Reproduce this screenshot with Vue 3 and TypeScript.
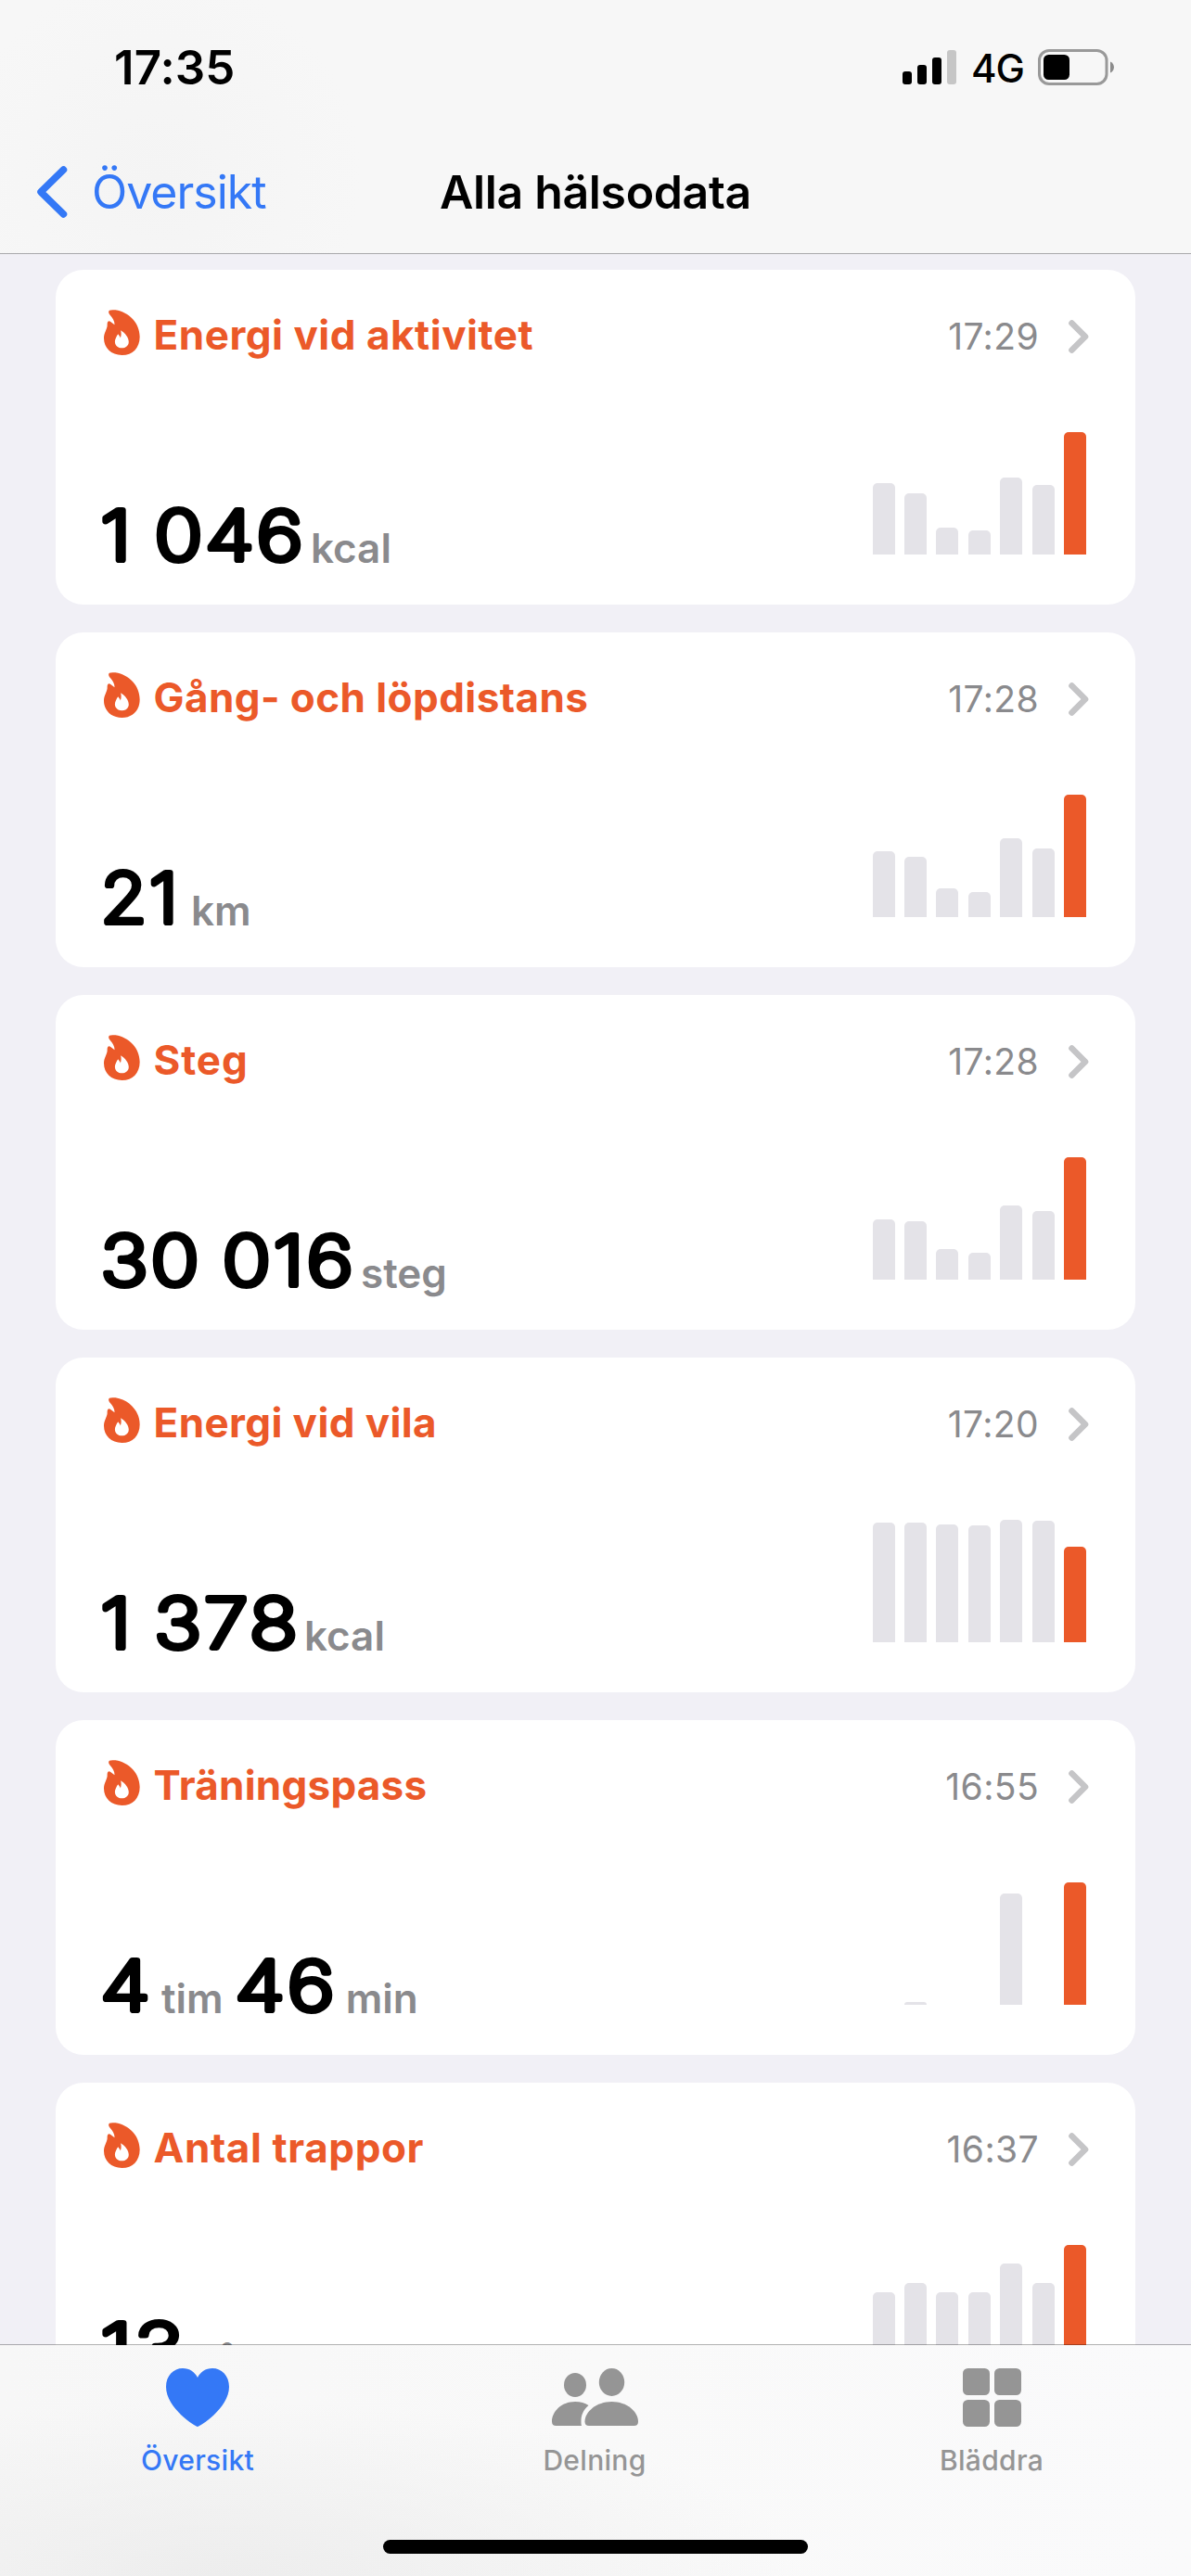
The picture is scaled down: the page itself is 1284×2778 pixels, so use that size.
<script setup lang="ts">
interface ValuePart {
  text: string
  unit: string
  width: number
  gap: number
}

interface Metric {
  title: string
  spacing: number
  time: string
  parts: ValuePart[]
  bars: number[]
}

const metrics: Metric[] = [
  {
    title: 'Energi vid aktivitet',
    spacing: 0.52,
    time: '17:29',
    parts: [{ text: '1 046', unit: 'kcal', width: 215, gap: 9 }],
    bars: [77, 66, 29, 26, 83, 75, 132],
  },
  {
    title: 'Gång- och löpdistans',
    spacing: 0.43,
    time: '17:28',
    parts: [{ text: '21', unit: 'km', width: 80, gap: 15 }],
    bars: [71, 65, 31, 27, 85, 74, 132],
  },
  {
    title: 'Steg',
    spacing: 0.9,
    time: '17:28',
    parts: [{ text: '30 016', unit: 'steg', width: 269, gap: 9 }],
    bars: [65, 63, 33, 29, 80, 74, 132],
  },
  {
    title: 'Energi vid vila',
    spacing: 0.4,
    time: '17:20',
    parts: [{ text: '1 378', unit: 'kcal', width: 209, gap: 8 }],
    bars: [129, 129, 127, 126, 132, 131, 103],
  },
  {
    title: 'Träningspass',
    spacing: 0.25,
    time: '16:55',
    parts: [
      { text: '4', unit: 'tim', width: 50, gap: 13 },
      { text: '46', unit: 'min', width: 104, gap: 13 },
    ],
    bars: [0, 3, 0, 0, 120, 0, 132],
  },
  {
    title: 'Antal trappor',
    spacing: 0.6,
    time: '16:37',
    parts: [{ text: '13', unit: 'våningar', width: 86, gap: 10 }],
    bars: [81, 91, 81, 81, 112, 91, 132],
  },
]
</script>

<template>
  <div class="phone">
    <header class="top">
      <div class="status">
        <span class="clock">17:35</span>
        <div class="indicators">
          <svg class="signal" width="59" height="38" viewBox="0 0 59 38">
            <rect x="0" y="23" width="10" height="14" rx="3" />
            <rect x="16" y="16" width="10" height="21" rx="3" />
            <rect x="32" y="8" width="10" height="29" rx="3" />
            <rect x="48" y="0" width="10" height="37" rx="3" fill="#c6c6c6" />
          </svg>
          <span class="network">4G</span>
          <svg class="battery" width="83" height="39" viewBox="0 0 83 39">
            <rect x="1.5" y="1.5" width="72.5" height="36" rx="10.5" fill="none" stroke="#999" stroke-width="3" />
            <rect x="6" y="6" width="28" height="27" rx="5.5" />
            <path d="M78 13.5 C83.3 15.5 83.3 23.5 78 25.5 Z" fill="#8c8c8c" />
          </svg>
        </div>
      </div>
      <nav class="nav">
        <a class="back">
          <svg width="36" height="60" viewBox="0 0 36 60">
            <path d="M30.500 6 L6 30 L30.500 54" fill="none" stroke="#3478f6" stroke-width="7.500" stroke-linecap="round" stroke-linejoin="round" />
          </svg>
          <span>Översikt</span>
        </a>
        <h1>Alla hälsodata</h1>
      </nav>
    </header>

    <main class="list">
      <article v-for="m in metrics" :key="m.title" class="card">
        <div class="head">
          <svg class="flame" width="39" height="49" viewBox="50 44 118 148">
            <path
              fill="#eb5929"
              fill-rule="evenodd"
              d="M68 46C72 44 80 44 88 45C132 52 167 88 167 132C167 168 144 192 109 192C74 192 50 168 50 137C50 120 60 108 61 96C61 90 61 86 63 83C65 80 69 81 72 83C77 86 81 90 85 93C85 80 78 70 70 61C65 56 64 49 68 46Z
              M105 111C120 120 131 135 131 149C131 161 121 169 109 169C96 169 86 160 86 148C86 140 91 132 94 126C96 123 98 124 99 127C101 130 103 132 104 136C107 128 107 120 105 111Z"
            />
          </svg>
          <h2 :style="{ letterSpacing: m.spacing + 'px' }">{{ m.title }}</h2>
          <time>{{ m.time }}</time>
          <svg class="chevron" width="24" height="38" viewBox="0 0 24 38">
            <path d="M4.500 4.500 L19 19 L4.500 33.500" fill="none" stroke="#c5c5c7" stroke-width="6.600" stroke-linecap="round" stroke-linejoin="round" />
          </svg>
        </div>
        <div class="body">
          <div class="value">
            <template v-for="p in m.parts" :key="p.unit">
              <svg class="number" :width="p.width" height="64" :viewBox="`0 0 ${p.width} 64`">
                <text x="-2.500" y="59" :textLength="p.width + 6" lengthAdjust="spacingAndGlyphs">{{ p.text }}</text>
              </svg>
              <span class="unit" :style="{ marginLeft: p.gap + 'px' }">{{ p.unit }}</span>
            </template>
          </div>
          <div class="chart">
            <i v-for="(h, i) in m.bars" :key="i" :class="{ today: i === 6 }" :style="{ height: h + 'px' }"></i>
          </div>
        </div>
      </article>
    </main>

    <footer class="tabs">
      <div class="row">
        <a class="tab active">
          <svg width="68" height="63" viewBox="0 0 68 63">
            <path fill="#3478f6" d="M34 63C32 63 0 43 0 20C0 8 8 0 18 0C25.500 0 31 4 34 10C37 4 42.500 0 50 0C60 0 68 8 68 20C68 43 36 63 34 63Z" />
          </svg>
          <span>Översikt</span>
        </a>
        <a class="tab">
          <svg width="93" height="63" viewBox="0 0 93 63">
            <g fill="#959595">
              <ellipse cx="25" cy="18" rx="12" ry="13" />
              <path d="M4.500 62C1.500 62 0 60.500 0 57.500C0 47 10 36 25 36C31 36 35.500 37.500 39.500 40C33.500 45 31.500 51 31.500 57C31.500 59 31.500 60.500 32 62Z" />
              <ellipse cx="64.500" cy="15" rx="13.700" ry="15" />
              <path d="M40 62C37 62 35.500 60.500 35.500 57.500C35.500 47 48 36 64.500 36C81 36 93 47 93 57.500C93 60.500 91.500 62 88.500 62Z" />
            </g>
          </svg>
          <span>Delning</span>
        </a>
        <a class="tab">
          <svg width="63" height="63" viewBox="0 0 63 63">
            <g fill="#959595">
              <rect width="29" height="29" rx="5.500" />
              <rect x="34" width="29" height="29" rx="5.500" />
              <rect y="34" width="29" height="29" rx="5.500" />
              <rect x="34" y="34" width="29" height="29" rx="5.500" />
            </g>
          </svg>
          <span>Bläddra</span>
        </a>
      </div>
      <div class="home"></div>
    </footer>
  </div>
</template>

<style>
body {
  margin: 0;
  background: #f1f0f6;
}
</style>

<style scoped>
.phone {
  display: flex;
  flex-direction: column;
  width: 1284px;
  height: 2778px;
  overflow: hidden;
  background: #f1f0f6;
  font-family: Inter, "Liberation Sans", sans-serif;
}
svg {
  display: block;
  flex: none;
}
h1,
h2 {
  margin: 0;
  font-weight: 600;
}
.top {
  flex: none;
  box-sizing: border-box;
  height: 274px;
  border-bottom: 1px solid #a8a8ab;
  background: radial-gradient(circle at 170px 190px, #f4f4f4, #f7f7f7 220px);
}
.status {
  display: flex;
  justify-content: space-between;
  height: 141px;
  padding: 0 82px 0 123px;
}
.clock {
  margin-top: 43px;
  font-size: 51px;
  line-height: 60px;
  font-weight: 600;
  letter-spacing: 0.1px;
}
.indicators {
  display: flex;
  align-items: flex-start;
}
.signal {
  margin-top: 54px;
}
.network {
  margin: 50px 15px 0 15px;
  font-size: 42px;
  line-height: 48px;
  font-weight: 500;
  letter-spacing: -1px;
}
.battery {
  margin-top: 53px;
}
.nav {
  display: grid;
  grid-template-columns: 1fr auto 1fr;
  align-items: center;
  height: 132px;
}
.back {
  display: flex;
  align-items: center;
  gap: 25px;
  padding-left: 38px;
  color: #3478f6;
  font-size: 50px;
  line-height: 60px;
  letter-spacing: -1px;
}
h1 {
  font-size: 50px;
  line-height: 60px;
  letter-spacing: -0.35px;
  white-space: nowrap;
}
.list {
  flex: 1;
  min-height: 0;
  overflow: hidden;
  display: flex;
  flex-direction: column;
  gap: 30px;
  padding: 17px 60px 0;
}
.card {
  flex: none;
  box-sizing: border-box;
  height: 361px;
  padding: 43px 49px 0 51px;
  border-radius: 30px;
  background: #fff;
}
.head {
  display: flex;
  height: 56px;
}
.flame {
  margin-left: 0.500px;
}
h2 {
  margin: 0 auto 0 15px;
  color: #eb5929;
  font-size: 44px;
  line-height: 54px;
  font-weight: 700;
  white-space: nowrap;
}
time {
  margin: 4px 31px 0 0;
  color: #8a8a8d;
  font-size: 39px;
  line-height: 50px;
  letter-spacing: 0.4px;
}
.chevron {
  margin-top: 10px;
}
.body {
  display: flex;
  justify-content: space-between;
  height: 262px;
}
.value {
  display: flex;
  align-items: flex-start;
}
.number {
  margin-top: 155px;
  overflow: visible;
}
.number text {
  font-size: 74px;
  font-weight: 200;
  letter-spacing: 2.5px;
  word-spacing: -4px;
  stroke: #000;
  stroke-width: 6.2px;
  stroke-linejoin: round;
  stroke-linecap: round;
}
.unit {
  margin-top: 174px;
  color: #8a8a8d;
  font-size: 44px;
  line-height: 54px;
  font-weight: 600;
}
.unit + .number {
  margin-left: 15px;
}
.chart {
  display: flex;
  align-items: flex-end;
  gap: 10.4px;
  height: 208px;
  margin-right: 4px;
}
.chart i {
  width: 24px;
  border-radius: 5px 5px 0 0;
  background: #e4e3e8;
}
.chart .today {
  background: #eb5929;
}
.tabs {
  position: relative;
  flex: none;
  box-sizing: border-box;
  height: 249px;
  padding-top: 25px;
  background:
    radial-gradient(ellipse 620px 190px at 240px 249px, #ededed, rgba(245, 245, 245, 0)),
    linear-gradient(90deg, #f7f7f7, #f9f9f9 50%, #fafafb);
}
.tabs::before {
  content: "";
  position: absolute;
  left: 0;
  right: 0;
  top: -1px;
  height: 1px;
  background: rgba(0, 0, 0, 0.3);
}
.row {
  display: grid;
  grid-template-columns: repeat(3, 428px);
  height: 185px;
  margin-left: -1px;
}
.tab {
  display: flex;
  flex-direction: column;
  align-items: center;
  gap: 18px;
  color: #959595;
  font-size: 30px;
  line-height: 36px;
  font-weight: 500;
  letter-spacing: 0.3px;
}
.tab.active {
  color: #3478f6;
}
.home {
  width: 458px;
  height: 15px;
  margin: 0 auto;
  border-radius: 8px;
  background: #000;
}
</style>
